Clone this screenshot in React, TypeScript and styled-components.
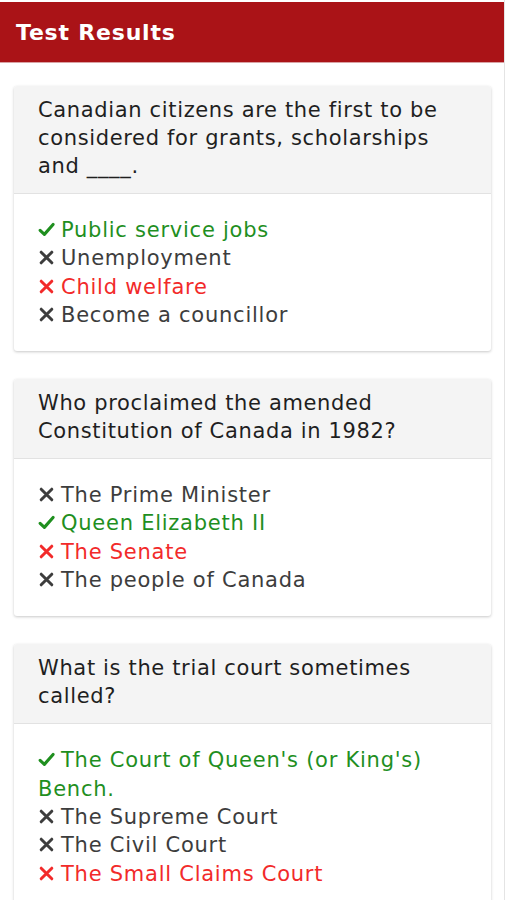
import styled, { createGlobalStyle } from 'styled-components'

const GlobalStyle = createGlobalStyle`
  html, body {
    margin: 0;
    padding: 0;
    background: #ffffff;
  }
  body {
    font-family: 'DejaVu Sans', 'Open Sans', sans-serif;
  }
`

const COLORS = {
  red: '#aa1317',
  correct: '#1f8f1f',
  wrong: '#f22a2a',
  neutral: '#3d3d3d',
  headBg: '#f4f4f4',
}

type Status = 'correct' | 'chosen' | 'other'

type Question = {
  text: string
  answers: { text: string; status: Status }[]
}

const QUESTIONS: Question[] = [
  {
    text: 'Canadian citizens are the first to be considered for grants, scholarships and ____.',
    answers: [
      { text: 'Public service jobs', status: 'correct' },
      { text: 'Unemployment', status: 'other' },
      { text: 'Child welfare', status: 'chosen' },
      { text: 'Become a councillor', status: 'other' },
    ],
  },
  {
    text: 'Who proclaimed the amended Constitution of Canada in 1982?',
    answers: [
      { text: 'The Prime Minister', status: 'other' },
      { text: 'Queen Elizabeth II', status: 'correct' },
      { text: 'The Senate', status: 'chosen' },
      { text: 'The people of Canada', status: 'other' },
    ],
  },
  {
    text: 'What is the trial court sometimes called?',
    answers: [
      { text: "The Court of Queen's (or King's) Bench.", status: 'correct' },
      { text: 'The Supreme Court', status: 'other' },
      { text: 'The Civil Court', status: 'other' },
      { text: 'The Small Claims Court', status: 'chosen' },
    ],
  },
]

const Page = styled.div`
  width: 505px;
  min-height: 900px;
  padding-top: 2px;
  border-right: 1px solid #e4e4e4;
  box-sizing: border-box;
  overflow: hidden;
`

const TopBar = styled.header`
  height: 61px;
  background: ${COLORS.red};
  display: flex;
  align-items: center;
  padding: 0 16px;
  border-bottom: 1px solid #d9a2a4;
  box-sizing: border-box;
`

const Title = styled.h1`
  margin: 0;
  color: #ffffff;
  font-size: 22px;
  font-weight: 600;
  letter-spacing: 0.8px;
`

const List = styled.main`
  display: flex;
  flex-direction: column;
  gap: 28px;
  padding: 23px 13px 0 14px;
`

const Card = styled.section`
  background: #ffffff;
  border-radius: 3px;
  box-shadow: 0 1px 3px rgba(0, 0, 0, 0.22);
  overflow: hidden;
`

const CardHead = styled.div`
  background: ${COLORS.headBg};
  border-bottom: 1px solid #e2e2e2;
  padding: 10px 24px 13px;
  font-size: 21px;
  letter-spacing: 0.65px;
  line-height: 28px;
  color: #1f1f1f;
`

const Answers = styled.ul`
  list-style: none;
  margin: 0;
  padding: 22px 24px 22px;
`

const Answer = styled.li<{ $status: Status }>`
  font-size: 21px;
  letter-spacing: 0.75px;
  line-height: 28.3px;
  color: ${({ $status }) =>
    $status === 'correct'
      ? COLORS.correct
      : $status === 'chosen'
        ? COLORS.wrong
        : COLORS.neutral};
`

const Mark = styled.svg`
  width: 17px;
  height: 17px;
  margin-right: 6px;
  vertical-align: -1px;
`

const Check = () => (
  <Mark viewBox="0 0 16 16">
    <path
      d="M2 8.8 L6 12.6 L14.2 3.2"
      fill="none"
      stroke="currentColor"
      strokeWidth="2.9"
      strokeLinecap="round"
      strokeLinejoin="round"
    />
  </Mark>
)

const Cross = () => (
  <Mark viewBox="0 0 16 16">
    <path
      d="M3 3 L13 13 M13 3 L3 13"
      fill="none"
      stroke="currentColor"
      strokeWidth="2.8"
      strokeLinecap="round"
    />
  </Mark>
)

export default function App() {
  return (
    <>
      <GlobalStyle />
      <Page>
        <TopBar>
          <Title>Test Results</Title>
        </TopBar>
        <List>
          {QUESTIONS.map((q) => (
            <Card key={q.text}>
              <CardHead>{q.text}</CardHead>
              <Answers>
                {q.answers.map((a) => (
                  <Answer key={a.text} $status={a.status}>
                    {a.status === 'correct' ? <Check /> : <Cross />}
                    {a.text}
                  </Answer>
                ))}
              </Answers>
            </Card>
          ))}
        </List>
      </Page>
    </>
  )
}
